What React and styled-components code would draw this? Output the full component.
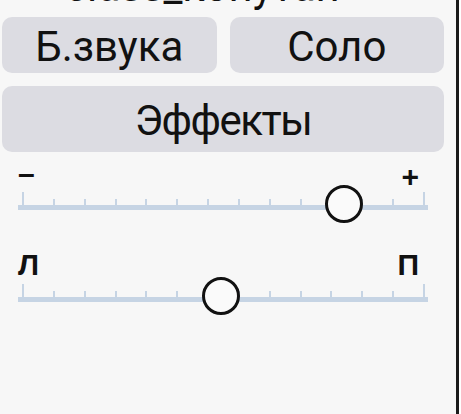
import React from "react";
import styled, { createGlobalStyle } from "styled-components";

const Global = createGlobalStyle`
  html, body { margin: 0; padding: 0; background: #ffffff; }
  body { font-family: Roboto, "Liberation Sans", Arial, sans-serif; }
`;

const Panel = styled.div`
  box-sizing: border-box;
  width: 459px;
  height: 414px;
  overflow: hidden;
  background: #f7f7f7;
  border-right: 3px solid #1b1b1b;
  padding: 0 12px 0 2px;
  display: flex;
  flex-direction: column;
`;

const Title = styled.div`
  margin-top: -37px;
  padding-left: 63px;
  font-size: 42px;
  line-height: 48px;
  color: #111;
  white-space: nowrap;
`;

const ButtonRow = styled.div`
  display: grid;
  grid-template-columns: 1fr 1fr;
  gap: 13px;
  margin-top: 6px;
`;

const Button = styled.button`
  box-sizing: border-box;
  height: ${(p) => p.$h}px;
  margin-top: ${(p) => p.$mt || 0}px;
  border: none;
  border-radius: 10px;
  background: #dcdce2;
  color: #111;
  font-family: Roboto, "Liberation Sans", Arial, sans-serif;
  font-size: 42px;
  letter-spacing: ${(p) => p.$ls || 0}px;
  line-height: 1;
  padding: 4px 0 0;
  display: flex;
  align-items: center;
  justify-content: center;
`;

const SliderBlock = styled.div`
  margin-top: ${(p) => p.$mt}px;
  padding: 0 16px;
`;

const LabelRow = styled.div`
  display: flex;
  justify-content: space-between;
  height: 30px;
  line-height: 30px;
  font-family: "Liberation Sans", Arial, sans-serif;
  font-size: 30px;
  font-weight: bold;
  color: #111;
  padding-right: 9px;
  margin-bottom: ${(p) => p.$gap}px;
`;

const Sign = styled.span`
  position: relative;
  top: ${(p) => p.$dy || 0}px;
`;

const TrackArea = styled.div`
  position: relative;
  height: 18px;
`;

const Ticks = styled.div`
  display: flex;
  justify-content: space-between;
  align-items: flex-end;
  height: 13px;
  padding: 0 3px 0 4px;
`;

const Tick = styled.div`
  width: 2px;
  height: ${(p) => (p.$major ? 13 : 6)}px;
  background: #c6d4e4;
`;

const Track = styled.div`
  height: 5px;
  background: #c6d4e4;
`;

const Thumb = styled.div`
  position: absolute;
  top: -7px;
  width: 38px;
  height: 38px;
  box-sizing: border-box;
  border-radius: 50%;
  border: 3px solid #111;
  background: #fafafa;
  transform: translateX(-50%);
`;

function Slider({ left, right, value, mt, gap, leftDy }) {
  const ticks = Array.from({ length: 14 }, (_, i) => i);
  return (
    <SliderBlock $mt={mt}>
      <LabelRow $gap={gap}>
        <Sign $dy={leftDy}>{left}</Sign>
        <Sign>{right}</Sign>
      </LabelRow>
      <TrackArea>
        <Ticks>
          {ticks.map((i) => (
            <Tick key={i} $major={i === 0 || i === ticks.length - 1} />
          ))}
        </Ticks>
        <Track />
        <Thumb style={{ left: `calc(5px + ${value / 100} * (100% - 9px))` }} />
      </TrackArea>
    </SliderBlock>
  );
}

export default function App() {
  return (
    <>
      <Global />
      <Panel>
        <Title>class_копутан</Title>
        <ButtonRow>
          <Button $h={56}>Б.звука</Button>
          <Button $h={56}>Соло</Button>
        </ButtonRow>
        <Button $h={66} $mt={13} $ls={-1.5}>Эффекты</Button>
        <Slider left="–" right="+" value={80} mt={10} gap={0} leftDy={-3} />
        <Slider left="Л" right="П" value={49.5} mt={40} gap={4} />
      </Panel>
    </>
  );
}
